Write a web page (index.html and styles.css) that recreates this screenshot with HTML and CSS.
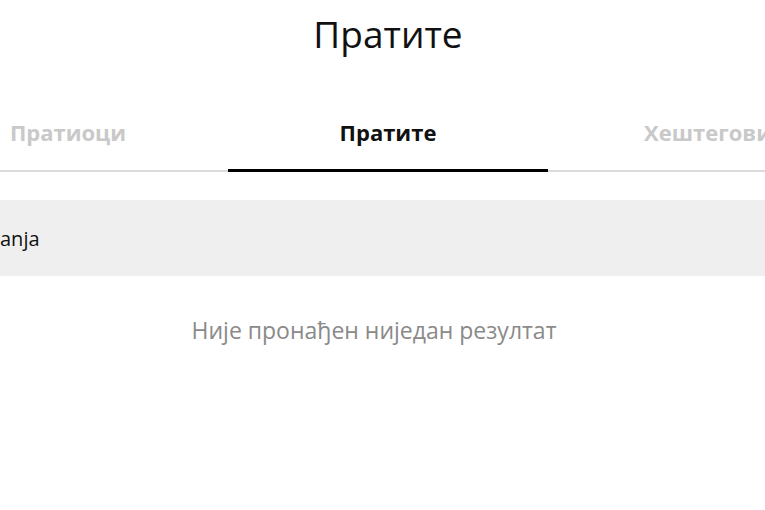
FILE: index.html
```html
<!DOCTYPE html>
<html lang="sr">
<head>
<meta charset="utf-8">
<title>Пратите</title>
<link rel="stylesheet" href="styles.css">
</head>
<body>
<div class="page">
  <h1 class="title">Пратите</h1>
  <nav class="tabs">
    <div class="tab">Пратиоци</div>
    <div class="tab active">Пратите</div>
    <div class="tab">Хештегови</div>
  </nav>
  <div class="search"><span class="query">anja</span></div>
  <p class="empty">Није пронађен ниједан резултат</p>
</div>
</body>
</html>
```
FILE: styles.css
```css
html, body {
  margin: 0;
  padding: 0;
  background: #ffffff;
  overflow: hidden;
}
body {
  width: 765px;
  height: 510px;
  font-family: "Open Sans", "Noto Sans", sans-serif;
  color: #000;
}
.page {
  width: 960px;
  margin-left: -92px;
}
.title {
  margin: 0;
  padding-top: 8px;
  height: 92px;
  font-size: 37px;
  font-weight: 400;
  line-height: 52px;
  text-align: center;
  color: #111;
  box-sizing: border-box;
}
.tabs {
  display: grid;
  grid-template-columns: repeat(3, 1fr);
  border-bottom: 2px solid #dcdcdc;
  height: 80px;
  box-sizing: border-box;
}
.tab {
  font-size: 22px;
  font-weight: 700;
  color: #c9c9c9;
  text-align: center;
  padding-top: 25px;
  white-space: nowrap;
  box-sizing: border-box;
}
.tab.active {
  color: #111;
  border-bottom: 3px solid #000;
  margin-bottom: -2px;
}
.search {
  margin-top: 28px;
  height: 76px;
  background: #efefef;
  display: flex;
  align-items: center;
  padding-left: 92px;
  font-size: 20px;
  color: #111;
}
.empty {
  margin: 38px 0 0;
  text-align: center;
  padding-right: 28px;
  font-size: 23px;
  color: #8a8a8a;
}
```
